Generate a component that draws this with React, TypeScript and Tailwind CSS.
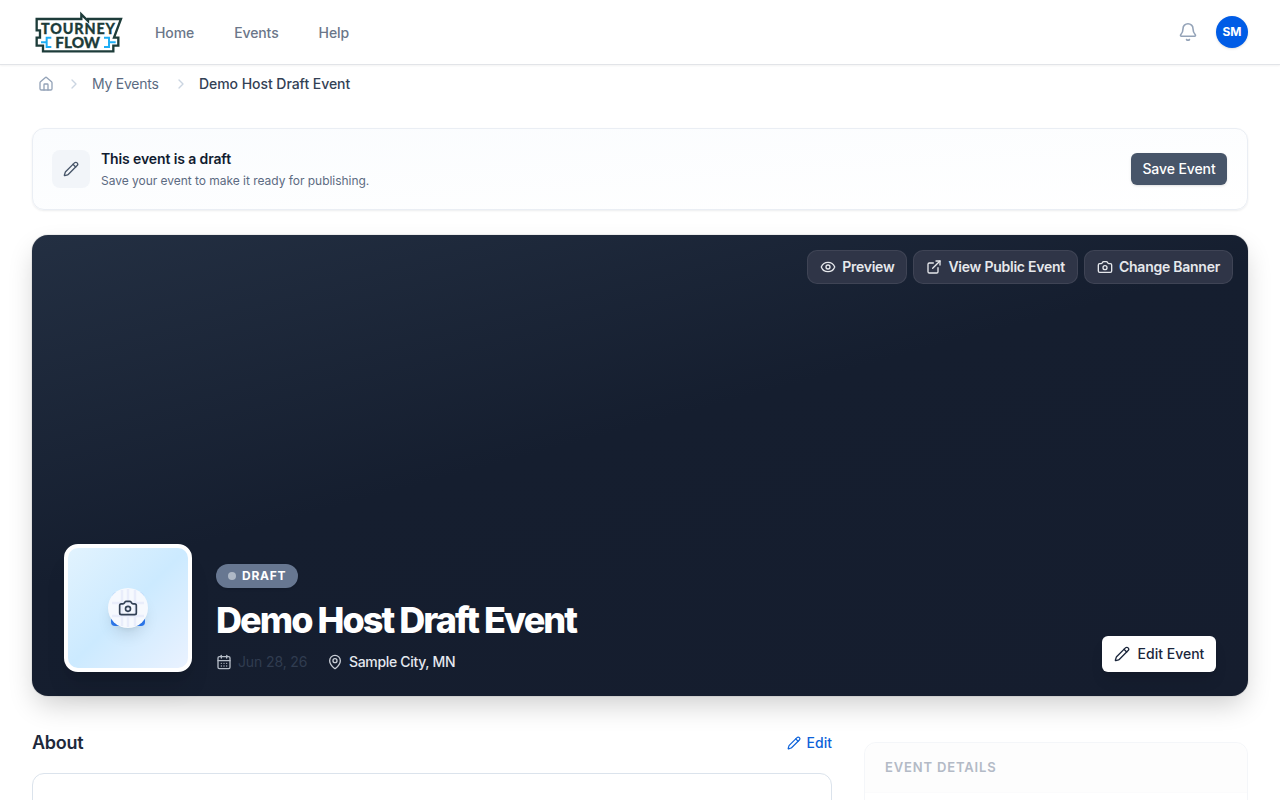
import type { ReactNode } from "react";
import {
  Bell,
  CalendarDays,
  Camera,
  ChevronRight,
  ExternalLink,
  Eye,
  House,
  MapPin,
  Pencil,
} from "lucide-react";

const navLinks = ["Home", "Events", "Help"];

function Logo() {
  return (
    <svg viewBox="36 30 276 132" className="h-11 w-23" aria-label="Tourney Flow">
      <path
        d="M50 57H184V43L204 63V57H303L282 113H295V137H280V154H69V137H50V113H60V91H50Z"
        fill="#fff"
        stroke="#1d3c3a"
        strokeWidth="7"
      />
      <path
        d="M63 127H78M94 113H80V141H94M287 127H269M252 113H267V141H252"
        fill="none"
        stroke="#1eaef5"
        strokeWidth="6"
      />
      <text
        x="63"
        y="102"
        textLength="222"
        lengthAdjust="spacing"
        className="fill-[#1d3c3a] stroke-[#1d3c3a] font-['Lato',sans-serif] text-[43px] font-black"
        strokeWidth="0.8"
      >
        TOURNEY
      </text>
      <text
        x="106"
        y="143"
        textLength="134"
        lengthAdjust="spacingAndGlyphs"
        className="fill-[#1d3c3a] stroke-[#1d3c3a] font-['Lato',sans-serif] text-[43px] font-black"
        strokeWidth="0.8"
      >
        FLOW
      </text>
    </svg>
  );
}

function Header() {
  return (
    <header className="flex h-[65px] items-center justify-between border-b border-[#e2e4e8] bg-white px-8 shadow-xs">
      <div className="flex items-center">
        <Logo />
        <nav className="mt-0.5 ml-[31px] flex gap-10 text-sm font-medium tracking-[-0.1px] text-[#6b7689]">
          {navLinks.map((link) => (
            <a key={link}>{link}</a>
          ))}
        </nav>
      </div>
      <div className="flex items-center gap-[18px]">
        <Bell className="size-5 text-[#94a3b8]" strokeWidth={1.9} />
        <div className="grid size-8 place-items-center rounded-full bg-[#005ce6] text-xs font-bold text-white shadow-sm">
          SM
        </div>
      </div>
    </header>
  );
}

function Breadcrumb() {
  return (
    <div className="flex h-[38px] items-center pl-1.5 text-sm">
      <House className="size-4 text-[#94a3b8]" strokeWidth={2} />
      <ChevronRight className="mr-2.5 ml-3 size-4 text-[#cbd5e1]" />
      <span className="w-[67px] tracking-[-0.25px] whitespace-nowrap text-[#5b6b82]">
        My Events
      </span>
      <ChevronRight className="mr-2.5 ml-3.5 size-4 text-[#cbd5e1]" />
      <span className="font-medium tracking-[-0.05px] text-[#334155]">Demo Host Draft Event</span>
    </div>
  );
}

function DraftNotice() {
  return (
    <div className="mt-[25px] flex h-[82px] items-center justify-between rounded-xl border border-[#eaeef4] bg-gradient-to-br from-[#fafcfe] to-white pr-5 pl-[19px] shadow-[0_1px_2px_rgba(15,23,42,0.08)]">
      <div className="flex items-center gap-[11px]">
        <div className="grid size-[38px] place-items-center rounded-lg bg-[#f2f5f9]">
          <Pencil className="size-4 text-[#475569]" strokeWidth={2} />
        </div>
        <div>
          <p className="mt-px text-sm leading-5 font-semibold tracking-[-0.12px] text-[#111c30]">
            This event is a draft
          </p>
          <p className="mt-[3px] text-xs leading-[18px] tracking-[-0.03px] text-[#5c6b82]">
            Save your event to make it ready for publishing.
          </p>
        </div>
      </div>
      <button className="h-8 w-24 rounded-md bg-[#475569] text-sm font-medium tracking-[-0.1px] text-white shadow-sm">
        Save Event
      </button>
    </div>
  );
}

function BannerButton({ icon, children }: { icon: ReactNode; children: ReactNode }) {
  return (
    <button className="flex h-[34px] items-center gap-1.5 rounded-[10px] border border-white/8 bg-[#2f3547] px-3 text-sm font-semibold tracking-[-0.25px] text-[#e6e8ec]">
      {icon}
      {children}
    </button>
  );
}

function EventLogo() {
  return (
    <div className="relative grid size-32 place-items-center rounded-[14px] border-4 border-white bg-linear-[135deg] from-[#e2f3fe] via-[#cceaff] to-[#eaf2ff] shadow-xl">
      <svg viewBox="0 0 40 40" className="size-10">
        <rect x="4" y="4" width="32" height="30" rx="5" fill="#b4d2fa" />
        <path d="M3 30H37V34Q37 38 33 38H7Q3 38 3 34Z" fill="#2f7df6" />
      </svg>
      <div className="absolute grid size-10 place-items-center rounded-full bg-[#f6f9fe] shadow-lg">
        <svg viewBox="0 0 40 40" className="absolute size-10" stroke="#e9edfb" strokeWidth="2.5">
          <path d="M14 2V38M20 1V39M27 2V38M4 15H36M4 28H36" />
        </svg>
        <Camera className="relative size-5 text-[#334155]" strokeWidth={2} />
      </div>
    </div>
  );
}

function Hero() {
  return (
    <section className="mt-[25px] flex h-[461px] flex-col justify-between rounded-2xl bg-linear-[165deg] from-[#232f42] via-[#151e2f] via-45% to-[#151d2e] shadow-[0_12px_28px_-4px_rgba(0,0,0,0.2),0_0_1px_rgba(0,0,0,0.6)]">
      <div className="flex justify-end gap-1.5 pt-[15px] pr-[15px]">
        <BannerButton icon={<Eye className="size-4" />}>Preview</BannerButton>
        <BannerButton icon={<ExternalLink className="size-4" />}>View Public Event</BannerButton>
        <BannerButton icon={<Camera className="size-4" />}>Change Banner</BannerButton>
      </div>
      <div className="flex items-end justify-between px-8 pb-6">
        <div className="flex items-end gap-6">
          <EventLogo />
          <div>
            <div className="flex h-6 w-[82px] items-center rounded-full bg-[#677791] pl-3 text-xs font-bold tracking-[0.06em] text-white shadow-sm">
              <span className="mr-1.5 size-2 rounded-full bg-[#aeb8c6]" />
              DRAFT
            </div>
            <h1 className="mt-2.5 text-4xl leading-[45px] font-extrabold tracking-[-0.054em] text-white">
              Demo Host Draft Event
            </h1>
            <div className="mt-[9px] flex h-5 items-center text-sm">
              <CalendarDays className="size-4 text-[#b5bcc7]" />
              <span className="ml-1.5 w-[69px] tracking-[-0.12px] whitespace-nowrap text-[#303c50]">
                Jun 28, 26
              </span>
              <MapPin className="ml-5 size-4 text-[#c9ced6]" />
              <span className="ml-1.5 font-medium tracking-[-0.32px] text-[#e4e8ee]">
                Sample City, MN
              </span>
            </div>
          </div>
        </div>
        <button className="flex h-9 w-[114px] items-center justify-center gap-2 rounded-md bg-white text-sm font-medium text-[#1b263b] shadow-lg">
          <Pencil className="size-4" />
          Edit Event
        </button>
      </div>
    </section>
  );
}

function Details() {
  return (
    <div className="flex gap-8">
      <section className="mt-[33px] w-[800px]">
        <div className="flex h-7 items-center justify-between">
          <h2 className="text-lg font-semibold tracking-[-0.25px] text-[#1e293b]">About</h2>
          <a className="flex items-center gap-1.5 text-sm font-medium text-[#0d62d9]">
            <Pencil className="size-3.5" />
            Edit
          </a>
        </div>
        <div className="mt-4 h-40 rounded-xl border border-[#dbe3ec] bg-white" />
      </section>
      <aside className="mt-[46px] h-60 flex-1 rounded-xl border border-[#f4f6f9] bg-white">
        <h3 className="h-[50px] rounded-t-xl border-b border-[#fbfbfc] bg-[#fdfdfd] px-5 pt-3.5 text-[13px] leading-5 font-semibold tracking-[0.85px] text-[#b3bac6]">
          EVENT DETAILS
        </h3>
      </aside>
    </div>
  );
}

export default function App() {
  return (
    <div className="h-screen overflow-hidden bg-white font-['Inter',sans-serif] antialiased">
      <Header />
      <main className="px-8">
        <Breadcrumb />
        <DraftNotice />
        <Hero />
        <Details />
      </main>
    </div>
  );
}
